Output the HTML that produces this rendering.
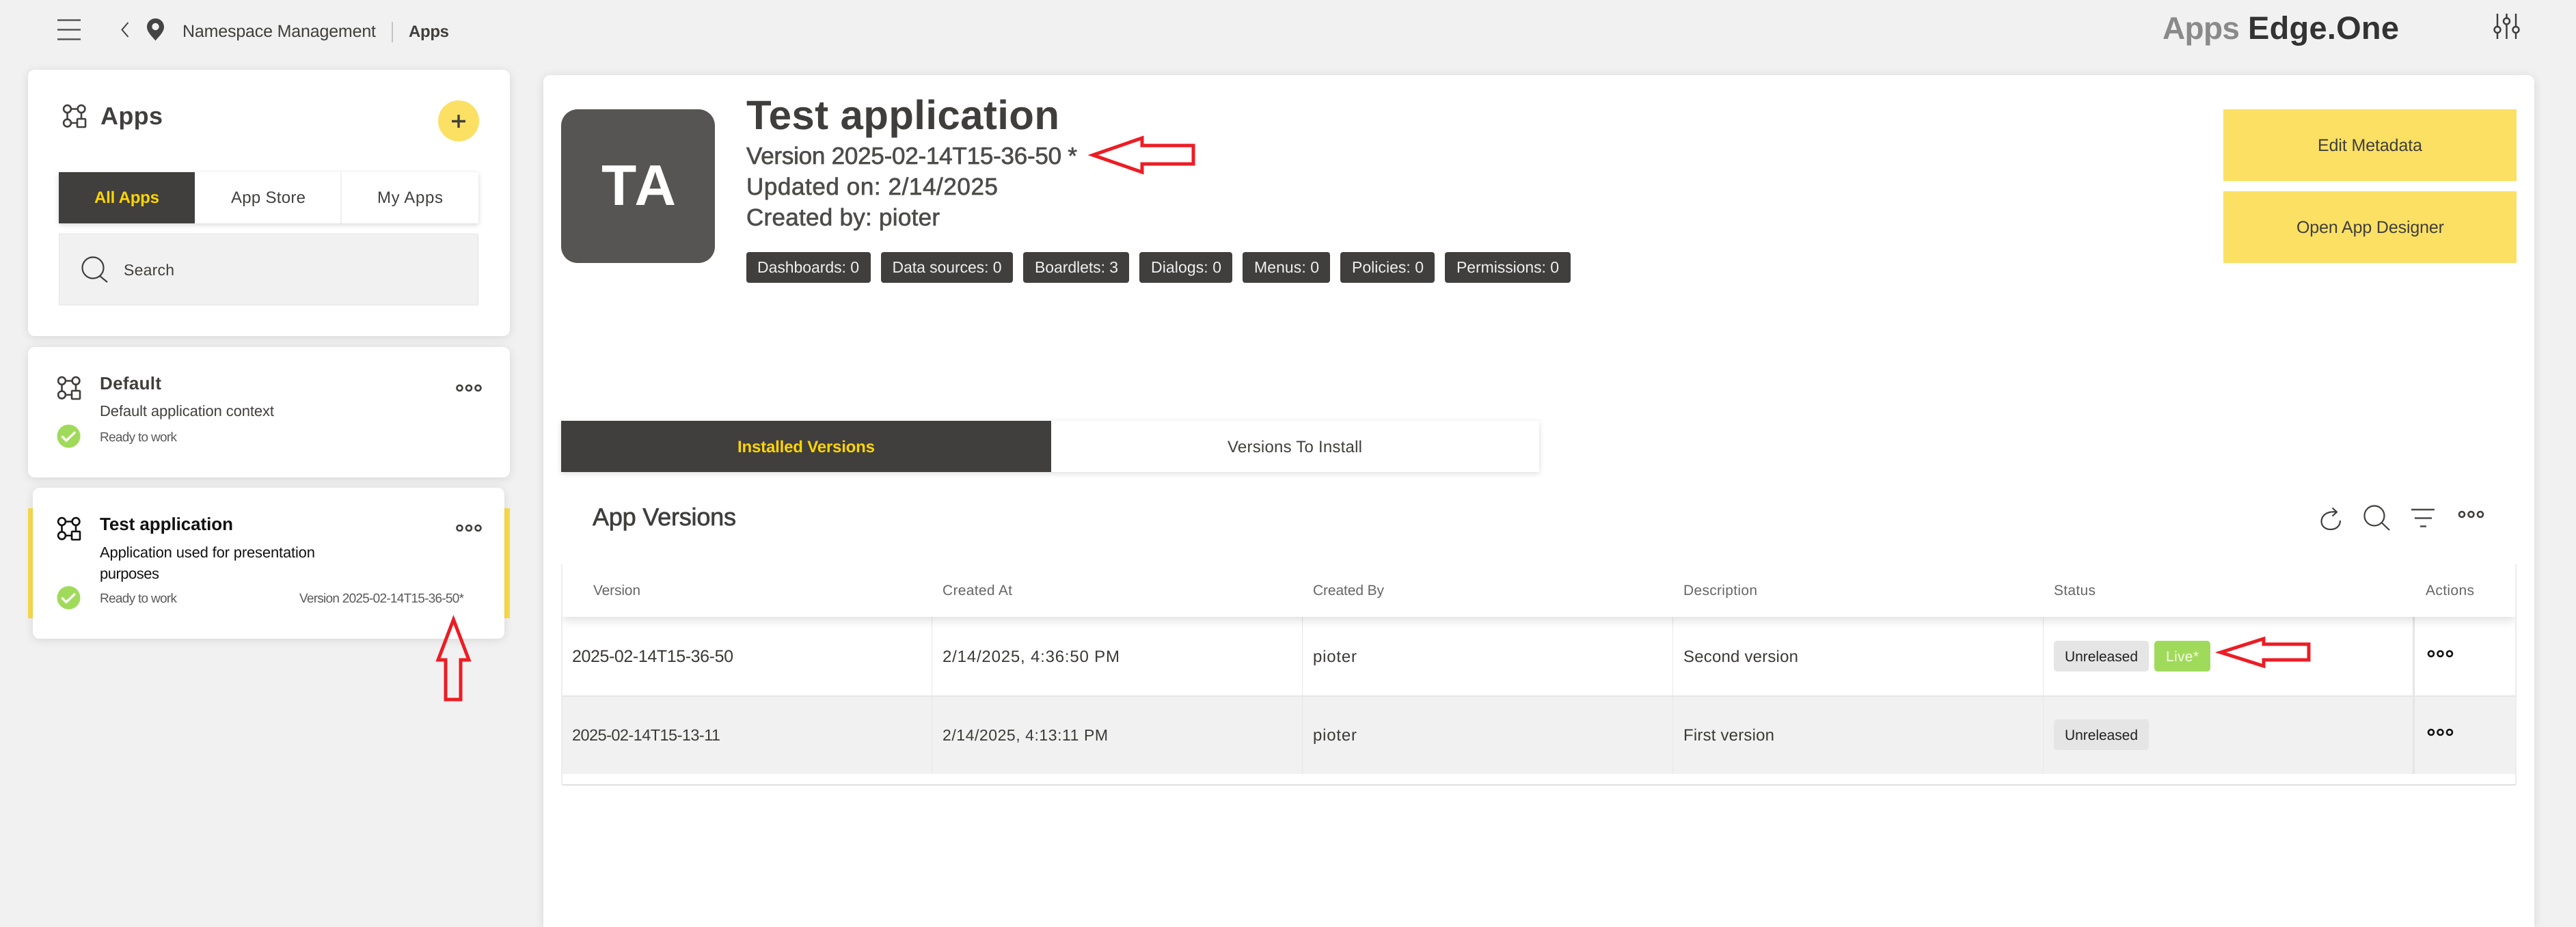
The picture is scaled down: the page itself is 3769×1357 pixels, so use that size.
<!DOCTYPE html>
<html lang="en">
<head>
<meta charset="utf-8">
<title>Apps Edge.One</title>
<style>
html,body{margin:0;padding:0;background:#f1f1f1;width:3769px;height:1357px;overflow:hidden}
body{position:relative;font-family:"Liberation Sans",sans-serif}
.b{position:absolute;box-sizing:border-box}
.card{background:#fff;border-radius:10px;box-shadow:0 2px 14px rgba(0,0,0,.11)}
svg.o{position:absolute;left:0;top:0;display:block}
svg text{font-family:"Liberation Sans",sans-serif;fill:#403f3d;text-rendering:geometricPrecision;stroke:currentColor;stroke-width:0}
.bd{font-weight:700}
.m{stroke-width:.7px}
.y{fill:#ffd500}
.badge text{fill:#eee;font-size:23px}
.h{fill:#666;font-size:21px}
.c{font-size:24px;fill:#3a3937}
.ln{fill:none;stroke:#403f3d;stroke-width:2.2}
.arrow{fill:none;stroke:#ed1c24;stroke-width:5;stroke-linejoin:miter}
</style>
</head>
<body>
<!-- left column -->
<div class="b card" style="left:41px;top:102px;width:705px;height:390px"></div>
<div class="b" style="left:86px;top:252px;width:614px;height:75px;background:#fff;box-shadow:0 2px 7px rgba(0,0,0,.16)"></div>
<div class="b" style="left:86px;top:252px;width:199px;height:75px;background:#403f3d"></div>
<div class="b" style="left:498px;top:252px;width:2px;height:75px;background:#f0f0f0"></div>
<div class="b" style="left:86px;top:342px;width:614px;height:105px;background:#f1f1f1;border:1px solid #e4e4e4"></div>
<div class="b" style="left:641px;top:147px;width:60px;height:60px;border-radius:50%;background:#fbe064"></div>
<div class="b card" style="left:41px;top:508px;width:705px;height:191px"></div>
<div class="b" style="left:41px;top:744px;width:705px;height:161px;background:#fbdc4a"></div>
<div class="b card" style="left:48px;top:714px;width:690px;height:221px"></div>
<!-- main card -->
<div class="b card" style="left:795px;top:110px;width:2913px;height:1247px;border-radius:10px 10px 0 0"></div>
<div class="b" style="left:821px;top:160px;width:225px;height:225px;background:#565553;border-radius:24px"></div>
<div class="b" style="left:3253px;top:160px;width:429px;height:105px;background:#fbe064"></div>
<div class="b" style="left:3253px;top:280px;width:429px;height:105px;background:#fbe064"></div>
<div class="b" style="left:1092px;top:369px;width:182px;height:45px;background:#403f3d;border-radius:4px"></div>
<div class="b" style="left:1289px;top:369px;width:193px;height:45px;background:#403f3d;border-radius:4px"></div>
<div class="b" style="left:1497px;top:369px;width:155px;height:45px;background:#403f3d;border-radius:4px"></div>
<div class="b" style="left:1667px;top:369px;width:136px;height:45px;background:#403f3d;border-radius:4px"></div>
<div class="b" style="left:1818px;top:369px;width:128px;height:45px;background:#403f3d;border-radius:4px"></div>
<div class="b" style="left:1961px;top:369px;width:138px;height:45px;background:#403f3d;border-radius:4px"></div>
<div class="b" style="left:2114px;top:369px;width:184px;height:45px;background:#403f3d;border-radius:4px"></div>
<!-- tabs -->
<div class="b" style="left:821px;top:616px;width:1431px;height:75px;background:#fff;box-shadow:0 2px 8px rgba(0,0,0,.14)"></div>
<div class="b" style="left:821px;top:616px;width:717px;height:75px;background:#403f3d"></div>
<!-- table -->
<div class="b" style="left:821px;top:826px;width:2861px;height:324px;background:#fff;border-left:2px solid #ececec;border-right:2px solid #ececec;border-bottom:2px solid #e0e0e0;border-radius:0 0 3px 3px"></div>
<div class="b" style="left:823px;top:1018px;width:2857px;height:115px;background:#f1f1f1;border-top:2px solid #e6e6e6"></div>
<div class="b" style="left:1363px;top:903px;width:1px;height:230px;background:#e6e6e6"></div>
<div class="b" style="left:1905px;top:903px;width:1px;height:230px;background:#e6e6e6"></div>
<div class="b" style="left:2447px;top:903px;width:1px;height:230px;background:#e9e9e9"></div>
<div class="b" style="left:2989px;top:903px;width:1px;height:230px;background:#e9e9e9"></div>
<div class="b" style="left:3530px;top:903px;width:3px;height:230px;background:#e6e6e6"></div>
<div class="b" style="left:823px;top:826px;width:2857px;height:77px;background:#fff;box-shadow:0 5px 14px rgba(0,0,0,.13);clip-path:inset(0 0 -30px 0)"></div>
<div class="b" style="left:3005px;top:938px;width:139px;height:45px;background:#e5e5e5;border-radius:5px"></div>
<div class="b" style="left:3152px;top:938px;width:82px;height:45px;background:#a0da5a;border-radius:5px"></div>
<div class="b" style="left:3005px;top:1053px;width:139px;height:45px;background:#e5e5e5;border-radius:5px"></div>

<svg class="o" width="3769" height="1357" viewBox="0 0 3769 1357" xmlns="http://www.w3.org/2000/svg">
<defs>
<symbol id="appi" viewBox="0 0 34 34" overflow="visible">
<g fill="none" stroke="currentColor" stroke-width="2.6">
<circle cx="6.5" cy="6.5" r="5.4"/><circle cx="27" cy="6.5" r="5.4"/><circle cx="6.5" cy="27" r="5.4"/>
<rect x="21" y="21" width="12" height="12" rx="1"/>
<path d="M11.5 6.5H22M6.5 11.5V22M27 11.5V21M11.5 27H21"/>
</g>
</symbol>
<symbol id="dots" viewBox="0 0 38 12" overflow="visible">
<g fill="none" stroke="currentColor" stroke-width="2.6">
<circle cx="5.5" cy="6" r="4"/><circle cx="19" cy="6" r="4"/><circle cx="32.5" cy="6" r="4"/>
</g>
</symbol>
</defs>

<!-- top bar -->
<g stroke="#555" stroke-width="2.6"><path d="M84 29.5H118M84 43.5H118M84 57.5H118"/></g>
<path d="M187.5 33 L178.5 43.5 L187.5 54" fill="none" stroke="#444" stroke-width="2"/>
<path d="M227.5 27C220.5 27 215 32.5 215 39.5C215 47 223 54 227.5 59.5C232 54 240 47 240 39.5C240 32.5 234.5 27 227.5 27Z" fill="#444"/>
<circle cx="227.5" cy="39" r="5.2" fill="#f1f1f1"/>
<text x="267" y="54" font-size="25" textLength="283">Namespace Management</text>
<rect x="573" y="32" width="2" height="30" fill="#c4c4c4"/>
<text x="598" y="54" font-size="24" class="bd" textLength="59">Apps</text>
<text x="3164" y="57" font-size="46" class="bd" style="fill:#8a8a8a" textLength="113">Apps</text>
<text x="3289" y="57" font-size="47" class="bd" style="fill:#333" textLength="221">Edge.One</text>
<g stroke="#3a3a3a" stroke-width="2.4" fill="#f1f1f1">
<path d="M3654 20V57M3667.5 20V57M3681 20V57"/>
<circle cx="3654" cy="43.5" r="4.5"/><circle cx="3667.5" cy="31" r="4.5"/><circle cx="3681" cy="43.5" r="4.5"/>
</g>

<!-- left: header card -->
<use href="#appi" x="92" y="153" width="34" height="34" style="color:#403f3d"/>
<text x="147" y="182" font-size="36" class="bd" textLength="91">Apps</text>
<path d="M671 168V187M661 177.5H681" stroke="#403f3d" stroke-width="3.4"/>
<text x="138" y="297" font-size="24" class="bd y" textLength="95">All Apps</text>
<text x="338" y="297" font-size="24" textLength="109">App Store</text>
<text x="552" y="297" font-size="24" textLength="96">My Apps</text>
<circle cx="136" cy="392" r="15.5" class="ln" stroke-width="2"/>
<path d="M146 404L157 413" class="ln"/>
<text x="181" y="403" font-size="23" textLength="74">Search</text>

<!-- default card -->
<use href="#appi" x="84" y="551" width="34" height="34" style="color:#403f3d"/>
<text x="146" y="570" font-size="26" class="bd" textLength="90">Default</text>
<text x="146" y="609" font-size="22" textLength="255">Default application context</text>
<circle cx="100.5" cy="638.5" r="17" fill="#a0da5a"/>
<path d="M90.5 638.5L97 645L110 632.5" fill="none" stroke="#fff" stroke-width="3.4"/>
<text x="146" y="646" font-size="19" style="fill:#595959" textLength="113">Ready to work</text>
<use href="#dots" x="667" y="562" width="38" height="12" style="color:#403f3d"/>

<!-- test card -->
<use href="#appi" x="84" y="757" width="34" height="34" style="color:#111"/>
<text x="146" y="776" font-size="26" class="bd" style="fill:#111" textLength="195">Test application</text>
<text x="146" y="816" font-size="22" style="fill:#111" textLength="315">Application used for presentation</text>
<text x="146" y="847" font-size="22" style="fill:#111" textLength="87">purposes</text>
<circle cx="100.5" cy="875" r="17" fill="#a0da5a"/>
<path d="M90.5 875L97 881.5L110 869" fill="none" stroke="#fff" stroke-width="3.4"/>
<text x="146" y="882" font-size="19" style="fill:#595959" textLength="113">Ready to work</text>
<text x="438" y="882" font-size="19" style="fill:#595959" textLength="241">Version 2025-02-14T15-36-50*</text>
<use href="#dots" x="667" y="767" width="38" height="12" style="color:#403f3d"/>
<polygon class="arrow" points="663.5,907 686,966 674,966 674,1024 652,1024 652,966 641,966"/>

<!-- app header -->
<text x="880" y="300" font-size="84" class="bd" style="fill:#fff" textLength="109">TA</text>
<text x="1092" y="189" font-size="60" class="bd" style="fill:#3f3e3c" textLength="458">Test application</text>
<g font-size="35" style="color:#4d4c4a">
<text x="1092" y="240" class="m" style="fill:#4d4c4a" textLength="484">Version 2025-02-14T15-36-50 *</text>
<text x="1092" y="285" class="m" style="fill:#4d4c4a" textLength="368">Updated on: 2/14/2025</text>
<text x="1092" y="330" class="m" style="fill:#4d4c4a" textLength="283">Created by: pioter</text>
</g>
<polygon class="arrow" points="1599,227 1671,202 1671,213 1746,213 1746,240 1671,240 1671,252"/>
<g class="badge">
<text x="1108" y="399" textLength="149">Dashboards: 0</text>
<text x="1305.5" y="399" textLength="160">Data sources: 0</text>
<text x="1514" y="399" textLength="122">Boardlets: 3</text>
<text x="1684" y="399" textLength="103">Dialogs: 0</text>
<text x="1835" y="399" textLength="95">Menus: 0</text>
<text x="1978" y="399" textLength="105">Policies: 0</text>
<text x="2131" y="399" textLength="150">Permissions: 0</text>
</g>
<text x="3391" y="221" font-size="25" textLength="153">Edit Metadata</text>
<text x="3360" y="341" font-size="25" textLength="216">Open App Designer</text>

<!-- tabs -->
<text x="1079" y="662" font-size="24" class="bd y" textLength="201">Installed Versions</text>
<text x="1796" y="662" font-size="24" textLength="197">Versions To Install</text>

<!-- toolbar -->
<text x="867" y="769" font-size="36" class="m" style="color:#3f3e3c;fill:#3f3e3c" textLength="210">App Versions</text>
<path d="M3418.5 749.5C3405 748 3397 754 3396.5 763C3396.5 771 3403 775 3410 775C3418 775 3424 770 3424 762" class="ln"/>
<path d="M3412.5 743.5L3419 749.5L3412.5 755.5" class="ln"/>
<circle cx="3474" cy="755" r="14.5" class="ln"/>
<path d="M3484.5 765L3496 776" class="ln"/>
<path d="M3528 746H3562M3533 758.5H3558M3541 770.5H3550" fill="none" stroke="#4a4a48" stroke-width="2.6"/>
<use href="#dots" x="3596.5" y="747" width="38" height="12" style="color:#403f3d"/>

<!-- table header -->
<text x="868" y="871" class="h" textLength="69">Version</text>
<text x="1379" y="871" class="h" textLength="102">Created At</text>
<text x="1921" y="871" class="h" textLength="104">Created By</text>
<text x="2463" y="871" class="h" textLength="108">Description</text>
<text x="3005" y="871" class="h" textLength="61">Status</text>
<text x="3549" y="871" class="h" textLength="71">Actions</text>

<!-- rows -->
<text x="837" y="969" class="c" style="font-size:25px" textLength="236">2025-02-14T15-36-50</text>
<text x="1379" y="969" class="c" textLength="259">2/14/2025, 4:36:50 PM</text>
<text x="1921" y="969" class="c" textLength="64">pioter</text>
<text x="2463" y="969" class="c" textLength="168">Second version</text>
<text x="3021" y="968" font-size="21" style="fill:#222" textLength="107">Unreleased</text>
<text x="3169" y="968" font-size="21" style="fill:#f4fae9" textLength="48">Live*</text>
<use href="#dots" x="3551.5" y="951" width="38" height="12" style="color:#111"/>
<polygon class="arrow" points="3249,955 3312,935 3312,943 3378,943 3378,966 3312,966 3312,975"/>

<text x="837" y="1084" class="c" style="font-size:23.5px" textLength="217">2025-02-14T15-13-11</text>
<text x="1379" y="1084" class="c" style="font-size:23px" textLength="242">2/14/2025, 4:13:11 PM</text>
<text x="1921" y="1084" class="c" textLength="64">pioter</text>
<text x="2463" y="1084" class="c" textLength="133">First version</text>
<text x="3021" y="1083" font-size="21" style="fill:#222" textLength="107">Unreleased</text>
<use href="#dots" x="3551.5" y="1066" width="38" height="12" style="color:#111"/>
</svg>
</body>
</html>
